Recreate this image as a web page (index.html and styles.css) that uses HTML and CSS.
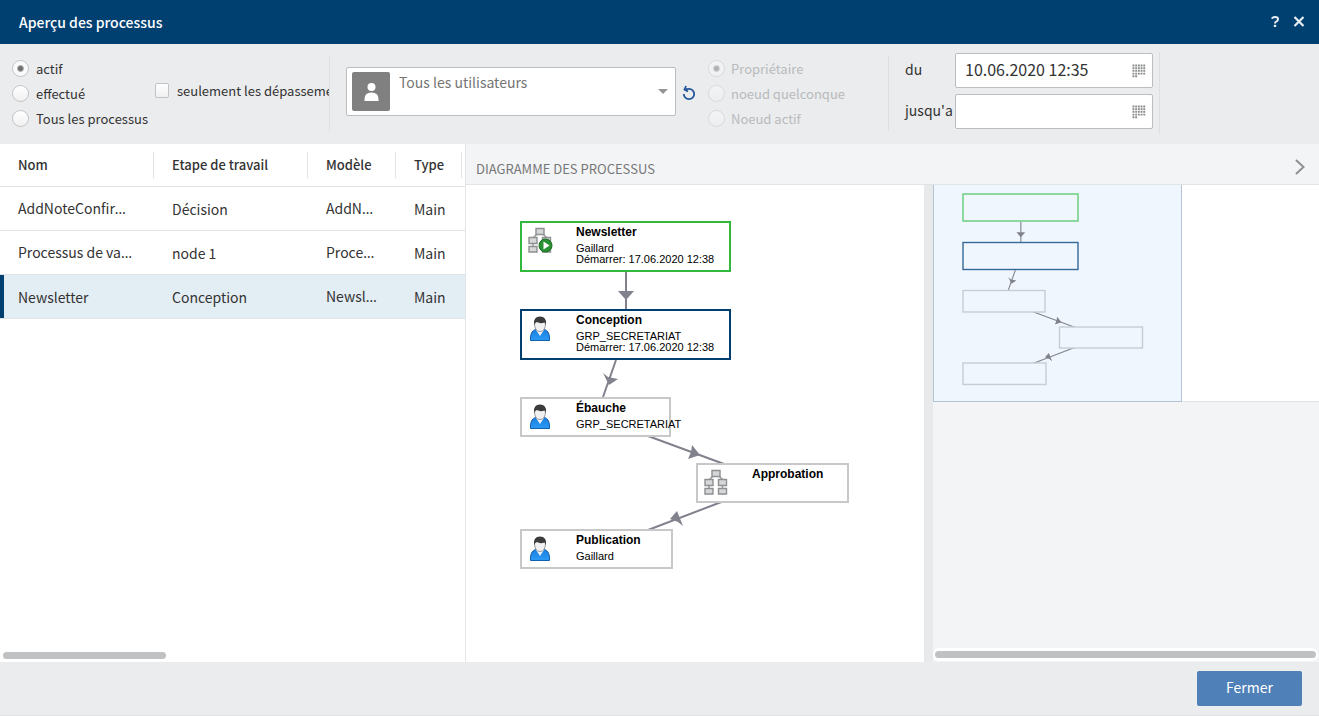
FILE: index.html
```html
<!DOCTYPE html>
<html lang="fr">
<head>
<meta charset="utf-8">
<title>Aperçu des processus</title>
<link rel="stylesheet" href="styles.css">
</head>
<body>
<svg class="defs" aria-hidden="true">
  <defs>
    <linearGradient id="shirt" x1="0" y1="0" x2="0" y2="1"><stop offset="0" stop-color="#1b7fe0"/><stop offset="1" stop-color="#2a9bf5"/></linearGradient>
    <symbol id="user" viewBox="0 0 24 28">
      <path d="M2.500 25.500V22Q3 16 7.500 14.500H16.500Q21 16 21.500 22V25.500Z" fill="url(#shirt)" stroke="#1461ad"/>
      <path d="M8 15 12 21 16 15Z" fill="#e9f2fa"/>
      <path d="M6.500 8Q6.500 3 12 3Q17.500 3 17.500 8Q17.500 16.500 12 16.500Q6.500 16.500 6.500 8Z" fill="#f1f1f1" stroke="#999"/>
      <path d="M6 10Q5 1.500 12 1.500Q19 1.500 18 10L16.500 7.500Q12 9 9 7Q7 7.500 6 10Z" fill="#3c3c3c"/>
    </symbol>
    <symbol id="flow" viewBox="0 0 24 28">
      <path d="M9 7 5 11M15 7 19 11M5 16V20M18.500 16V20" stroke="#999" stroke-width="1.500" fill="none"/>
      <g fill="#d6d7d8" stroke="#8e8f90" stroke-width="1.400"><path d="M8 1.500h8v6h-8zM1 10.500h8v6h-8zM14.500 10.500h8v6h-8zM1 19.500h8v5.500h-8zM14.500 19.500h8v5.500h-8z"/></g>
    </symbol>
    <symbol id="grid" viewBox="0 0 14 14">
      <path d="M.5 1.500H13.300M.5 4.200H13.300M.5 6.900H13.300M.5 9.600H13.300M.5 12.300H5.500" stroke="#8b8c8d" stroke-width="1.900" stroke-dasharray="1.900 .8"/>
    </symbol>
  </defs>
</svg>
<header class="titlebar">
  <h1>Aperçu des processus</h1>
  <button type="button" class="title-btn" aria-label="Aide"><svg width="12" height="14" viewBox="0 0 12 14" fill="none" stroke="#e6edf3" stroke-width="2"><path d="M3 3.800Q3.500 2 6 2Q9 2 9 4.200Q9 5.500 7.500 6.300Q6 7 6 8.500"/><path d="M6 9.800V12" stroke-width="2.400"/></svg></button>
  <button type="button" class="title-btn" aria-label="Fermer la fenêtre"><svg width="12" height="14" viewBox="0 0 12 14" stroke="#e6edf3" stroke-width="2.200"><path d="M1.500 2 10.500 11M10.500 2 1.500 11"/></svg></button>
</header>

<form class="filters">
  <div class="group status">
    <div class="radios">
      <label><input type="radio" name="etat" checked>actif</label>
      <label><input type="radio" name="etat">effectué</label>
      <label><input type="radio" name="etat">Tous les processus</label>
    </div>
    <label class="check"><input type="checkbox">seulement les dépassements</label>
  </div>
  <div class="group people">
    <div class="combo">
      <svg class="avatar" viewBox="0 0 38 39"><rect width="38" height="39" rx="2" fill="#808080"/><circle cx="19.500" cy="15" r="4" fill="#fff"/><path d="M12.500 29V27Q12.500 20.500 19.500 20.500Q26.500 20.500 26.500 27V29Z" fill="#fff"/></svg>
      <select aria-label="Utilisateur"><option>Tous les utilisateurs</option></select>
      <svg class="caret" viewBox="0 0 10 5"><path d="M0 0H10L5 5Z" fill="#939495"/></svg>
    </div>
    <button type="button" class="reset" aria-label="Réinitialiser"><svg width="14" height="16" viewBox="0 0 14 16" fill="none" stroke="#215698" stroke-width="1.800"><path d="M2.500 4.500Q4 3.800 7 3.800A5.200 5.200 0 1 1 1.800 9"/><path d="M4 1 2.500 4.500 6 6.500"/></svg></button>
    <div class="radios">
      <label class="off"><input type="radio" name="role" checked disabled>Propriétaire</label>
      <label class="off"><input type="radio" name="role" disabled>noeud quelconque</label>
      <label class="off"><input type="radio" name="role" disabled>Noeud actif</label>
    </div>
  </div>
  <div class="group dates">
    <label for="from">du</label>
    <div class="date"><input id="from" type="text" value="10.06.2020 12:35"><button type="button" aria-label="Choisir la date de début"><svg width="14" height="14"><use href="#grid"/></svg></button></div>
    <label for="to">jusqu'a</label>
    <div class="date"><input id="to" type="text"><button type="button" aria-label="Choisir la date de fin"><svg width="14" height="14"><use href="#grid"/></svg></button></div>
  </div>
</form>

<main class="content">
  <section class="list">
    <table>
      <colgroup><col class="c-name"><col class="c-step"><col class="c-model"><col class="c-type"><col></colgroup>
      <thead><tr><th><span>Nom</span></th><th><span>Etape de travail</span></th><th><span>Modèle</span></th><th><span>Type</span></th><th></th></tr></thead>
      <tbody>
        <tr><td>AddNoteConfir<span class="more">…</span></td><td>Décision</td><td>AddN<span class="more">…</span></td><td>Main</td><td></td></tr>
        <tr><td>Processus de va<span class="more">…</span></td><td>node 1</td><td>Proce<span class="more">…</span></td><td>Main</td><td></td></tr>
        <tr class="selected"><td>Newsletter</td><td>Conception</td><td>Newsl<span class="more">…</span></td><td>Main</td><td></td></tr>
      </tbody>
    </table>
    <div class="scroll scroll-list"></div>
  </section>
  <section class="diagram">
    <div class="diagram-head">
      <h2>DIAGRAMME DES PROCESSUS</h2>
      <button type="button" aria-label="Replier"><svg width="12" height="18" viewBox="0 0 12 18" fill="none" stroke="#8f9092" stroke-width="2"><path d="M2 2 9.500 9 2 16"/></svg></button>
    </div>
    <div class="panes">
      <div class="canvas">
        <svg class="edges" width="458" height="476" viewBox="0 0 458 476">
          <g id="links" stroke="#82828e" stroke-width="2" fill="#82828e">
            <path d="M160 87V125M150 175 137 212M182 251 258 279M258 316 182 345" fill="none"/>
            <path d="M152 106H168L160 115ZM137 188 142 192 152 194 143 200ZM226 260 234 270 222 274 225 267ZM211 326 217 341 212 337 204 334Z" stroke="none"/>
          </g>
        </svg>
        <div class="node n1"><svg class="ico" viewBox="0 0 24 28"><use href="#flow" width="24" height="28"/><circle cx="17.500" cy="18.500" r="6.500" fill="#2a9135" stroke="#176b20"/><path d="M15.500 14.500V22.500L21.500 18.500Z" fill="#fff"/></svg><div><b>Newsletter</b><span>Gaillard</span><span>Démarrer: 17.06.2020 12:38</span></div></div>
        <div class="node n2"><svg class="ico"><use href="#user"/></svg><div><b>Conception</b><span>GRP_SECRETARIAT</span><span>Démarrer: 17.06.2020 12:38</span></div></div>
        <div class="node n3"><svg class="ico"><use href="#user"/></svg><div><b>Ébauche</b><span>GRP_SECRETARIAT</span></div></div>
        <div class="node n4"><svg class="ico"><use href="#flow"/></svg><div><b>Approbation</b></div></div>
        <div class="node n5"><svg class="ico"><use href="#user"/></svg><div><b>Publication</b><span>Gaillard</span></div></div>
      </div>
      <div class="splitter"></div>
      <aside class="overview">
        <div class="map">
          <svg width="249" height="217" viewBox="0 0 249 217">
            <rect x="0.500" y="-1" width="248" height="217.500" fill="#eff6fe" stroke="#b3c3d3"/>
            <g transform="translate(0 -11) scale(.549)"><use href="#links"/></g>
            <g fill="#eff6fe" stroke-width="1.400"><rect x="30" y="9" width="115" height="27" stroke="#63cc77"/><rect x="30" y="57.500" width="115" height="27" stroke="#356a97"/><g stroke="#c6cdd5"><rect x="30" y="105.500" width="82" height="21.500"/><rect x="126.500" y="142" width="83" height="21"/><rect x="30" y="178" width="83" height="21.500"/></g></g>
          </svg>
        </div>
        <div class="track"><div class="scroll"></div></div>
      </aside>
    </div>
  </section>
</main>

<footer class="footer"><button type="button" class="close">Fermer</button></footer>
</body>
</html>
```
FILE: styles.css
```css
* { box-sizing: border-box; }
body {
  margin: 0;
  min-height: 100vh;
  display: flex;
  flex-direction: column;
  font-family: "Noto Sans CJK SC", "Noto Sans", sans-serif;
  font-size: 13px;
  line-height: 20px;
  color: #333;
  background: #ebeced;
}
button { padding: 0; border: 0; background: none; font: inherit; display: flex; align-items: center; justify-content: center; }
svg { display: block; flex: none; }
.defs { position: absolute; width: 0; height: 0; }

.titlebar { height: 44px; display: flex; align-items: center; padding: 0 8px 0 19px; background: #004071; color: #fff; }
.titlebar h1 { flex: 1; margin: 0; font-size: 14px; font-weight: 500; }
.title-btn { width: 24px; height: 24px; }

.filters { height: 100px; display: flex; background: #ebecee; overflow: hidden; }
.group { display: flex; border-right: 1px solid #dedfe1; }
.status { width: 330px; height: 75px; margin-top: 12px; padding-left: 12px; align-items: center; overflow: hidden; }
.radios { display: flex; flex-direction: column; flex: none; }
.radios label { height: 25px; display: flex; align-items: center; gap: 7px; white-space: nowrap; }
.status .radios { width: 143px; }
.check { display: flex; align-items: center; gap: 8px; height: 20px; margin-bottom: 6px; white-space: nowrap; }
input[type="radio"], input[type="checkbox"] { appearance: none; margin: 0; flex: none; background: linear-gradient(#fff, #f0f0f1); border: 1px solid #c2c3c4; }
input[type="radio"] { width: 17px; height: 17px; border-radius: 50%; }
input[type="radio"]:checked { background: radial-gradient(circle, #707070 0 2px, #fafafa 4px); }
input[type="checkbox"] { width: 14px; height: 15px; border-radius: 2px; }
.off { color: #b8babc; }
.off input { opacity: .45; }

.people { width: 559px; height: 75px; margin-top: 12px; padding-left: 16px; align-items: center; }
.combo { position: relative; width: 330px; height: 49px; margin-bottom: 4px; display: flex; align-items: center; padding-left: 5px; background: #fff; border: 1px solid #bcbdbe; border-radius: 2px; }
.avatar { width: 38px; height: 39px; }
.combo select { flex: 1; height: 47px; padding: 0 0 20px 9px; border: 0; background: none; appearance: none; color: #757575; font: inherit; font-size: 14px; }
.caret { position: absolute; right: 7px; width: 10px; height: 5px; }
.reset { width: 14px; height: 20px; margin: 0 12px 2px 6px; }
.people .radios label { gap: 6px; }

.dates { display: grid; grid-template-columns: 50px 198px; grid-auto-rows: 35px; row-gap: 6px; align-items: center; height: 82px; margin-top: 8px; padding: 1px 6px 0 16px; font-size: 14px; }
.dates label { padding-bottom: 4px; }
.date { display: flex; height: 35px; background: #fff; border: 1px solid #bcbdbe; border-radius: 2px; }
.date input { flex: 1; min-width: 0; padding: 0 0 3px 9px; border: 0; background: none; font: inherit; font-size: 16px; color: #333; }
.date button { width: 26px; }

.content { flex: 1; display: flex; min-height: 518px; }
.list { width: 466px; flex: none; display: flex; flex-direction: column; background: #fff; border-right: 1px solid #e4e5e6; }
table { width: 100%; border-collapse: separate; border-spacing: 0; table-layout: fixed; }
.c-name, .c-step { width: 154px; }
.c-model { width: 88px; }
.c-type { width: 66px; }
th { height: 43px; padding: 0; text-align: left; font-weight: 500; border-bottom: 1px solid #e2e3e4; }
th span { display: block; height: 26px; line-height: 26px; padding-left: 18px; border-right: 1px solid #e2e3e4; }
td { height: 44px; padding: 0 4px 0 18px; font-size: 14px; white-space: nowrap; border-bottom: 1px solid #e2e3e4; }
td:last-child { padding: 0; }
.more { font-family: "Noto Sans", sans-serif; }
.selected { background: #e3edf4; }
.selected td:first-child { box-shadow: inset 4px 0 #004071; }
.scroll { height: 7px; border-radius: 4px; background: #c0c1c2; }
.scroll-list { width: 163px; margin: auto 0 3px 3px; }

.diagram { flex: 1; min-width: 0; display: flex; flex-direction: column; }
.diagram-head { height: 41px; display: flex; align-items: center; padding: 6px 13px 0 10px; background: #f3f4f6; border-bottom: 1px solid #e2e3e5; }
.diagram-head h2 { flex: 1; margin: 0; padding-top: 4px; font-size: 13px; font-weight: 400; color: #777; }
.panes { flex: 1; display: flex; }
.canvas { position: relative; flex: 1; min-width: 0; background: #fff; overflow: hidden; }
.edges { position: absolute; top: 0; left: 0; }
.node { position: absolute; height: 40px; border: 2px solid #c8c8c8; background: #fff; font: 11px/11px "Liberation Sans", Arial, sans-serif; color: #000; white-space: nowrap; display: flex; padding: 3px 0 0 6px; gap: 24px; }
.node b { display: block; font-size: 12px; line-height: 12px; margin-bottom: 5px; }
.node span { display: block; }
.ico { width: 24px; height: 28px; margin-top: 1px; overflow: visible; }
.n1 { left: 54px; top: 36px; width: 211px; height: 51px; border-color: #32b83a; }
.n2 { left: 54px; top: 124px; width: 211px; height: 51px; border-color: #004071; }
.n3 { left: 54px; top: 212px; width: 151px; }
.n4 { left: 230px; top: 278px; width: 153px; }
.n5 { left: 54px; top: 344px; width: 153px; }
.splitter { width: 9px; background: #e8e9eb; }
.overview { width: 386px; display: flex; flex-direction: column; background: #f3f4f6; }
.map { background: #fff; border-bottom: 1px solid #e2e3e5; height: 217px; }
.track { margin: auto 1px 1px 0; padding: 3px 2px; border-radius: 6px; background: #fff; }

.footer { height: 54px; display: flex; align-items: center; justify-content: flex-end; padding-right: 17px; background: #ebecee; border-bottom: 1px solid #e0e1e2; }
.close { width: 105px; height: 35px; padding-bottom: 3px; border-radius: 2px; background: #5080b8; color: #fff; font-size: 14px; }
```
